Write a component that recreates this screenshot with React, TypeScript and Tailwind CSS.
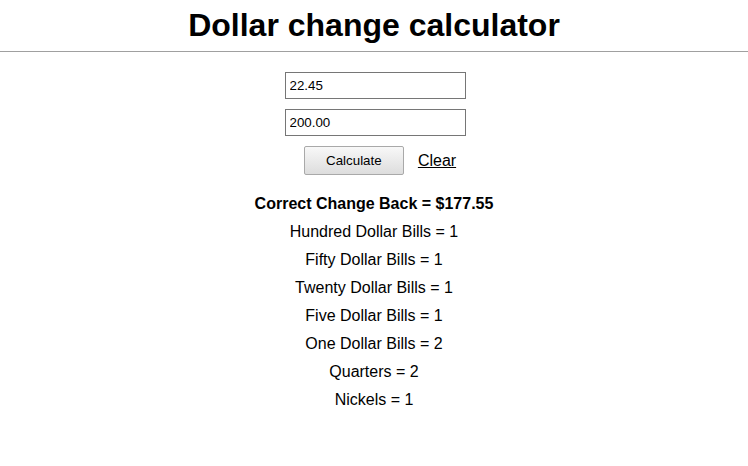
export default function App() {
  const rows = [
    "Hundred Dollar Bills = 1",
    "Fifty Dollar Bills = 1",
    "Twenty Dollar Bills = 1",
    "Five Dollar Bills = 1",
    "One Dollar Bills = 2",
    "Quarters = 2",
    "Nickels = 1",
  ];
  return (
    <div className="min-h-[466px] bg-white text-black font-['Liberation_Sans',Arial,sans-serif]">
      <div className="h-[52px] border-b border-[#a0a0a0] flex items-start justify-center">
        <h1 className="text-[32px] font-bold leading-[50px]">Dollar change calculator</h1>
      </div>
      <div className="flex flex-col items-center pt-[20px]">
        <input
          defaultValue="22.45"
          className="w-[181px] h-[27px] border border-[#767676] px-[4px] text-[13.33px] outline-none ml-[2px]"
        />
        <input
          defaultValue="200.00"
          className="w-[181px] h-[27px] border border-[#767676] px-[4px] text-[13.33px] outline-none mt-[10px] ml-[2px]"
        />
        <div className="flex items-center mt-[10px] ml-[12px]">
          <button className="w-[100px] h-[29px] border border-[#a9a9a9] rounded-[2px] bg-gradient-to-b from-[#f8f8f8] to-[#dddddd] text-[13.33px]">
            Calculate
          </button>
          <a href="#" className="ml-[14px] text-[16px] underline text-black">
            Clear
          </a>
        </div>
        <div className="mt-[15px] flex flex-col items-center text-[16px] leading-[28px]">
          <p className="font-bold">Correct Change Back = $177.55</p>
          {rows.map((r) => (
            <p key={r}>{r}</p>
          ))}
        </div>
      </div>
    </div>
  );
}
